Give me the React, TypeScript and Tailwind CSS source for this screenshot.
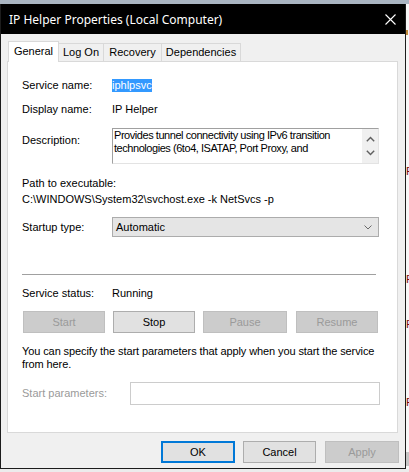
import React from "react";

const Chevron = ({ up = false, className = "" }: { up?: boolean; className?: string }) => (
  <svg width="9" height="6" viewBox="0 0 9 6" className={className}>
    <path
      d={up ? "M0.8 5.2 L4.5 1.4 L8.2 5.2" : "M0.8 0.8 L4.5 4.6 L8.2 0.8"}
      fill="none"
      stroke="#606060"
      strokeWidth="1.4"
    />
  </svg>
);

const SmallChevron = () => (
  <svg width="8" height="5" viewBox="0 0 8 5">
    <path d="M0.5 0.5 L4 4 L7.5 0.5" fill="none" stroke="#6a6a6a" strokeWidth="1" />
  </svg>
);

const CloseGlyph = () => (
  <svg width="11" height="11" viewBox="0 0 11 11">
    <path d="M0.5 0.5 L10.5 10.5 M10.5 0.5 L0.5 10.5" stroke="#ffffff" strokeWidth="1.1" />
  </svg>
);

function Tabs() {
  return (
    <div className="mt-[7px] ml-[7px] flex h-[20px] items-end">
      <div className="relative z-10 -mb-px flex h-[21px] w-[51px] items-center justify-center border border-b-0 border-[#d9d9d9] bg-white pb-[2px]">
        General
      </div>
      <div className="flex h-[18px] w-[45px] items-center justify-center border border-b-0 border-l-0 border-[#d9d9d9] bg-[#f0f0f0]">
        Log On
      </div>
      <div className="flex h-[18px] w-[58px] items-center justify-center border border-b-0 border-l-0 border-[#d9d9d9] bg-[#f0f0f0]">
        Recovery
      </div>
      <div className="flex h-[18px] w-[79px] items-center justify-center border border-b-0 border-l-0 border-[#d9d9d9] bg-[#f0f0f0]">
        Dependencies
      </div>
    </div>
  );
}

function ActionButton({
  label,
  enabled = false,
  wide = false,
}: {
  label: string;
  enabled?: boolean;
  wide?: boolean;
}) {
  const size = wide ? "w-[84px]" : "w-[82px]";
  return (
    <div
      className={
        enabled
          ? `flex h-[22px] ${size} items-center justify-center border border-[#adadad] bg-[#e1e1e1] text-black`
          : `flex h-[22px] ${size} items-center justify-center border border-[#bfbfbf] bg-[#cccccc] text-[#9a9a9a]`
      }
    >
      {label}
    </div>
  );
}

function GeneralPanel() {
  return (
    <div className="relative ml-[6px] flex h-[372px] w-[391px] flex-col border border-[#d9d9d9] bg-white pl-[14px]">
      {/* service name */}
      <div className="mt-[17px] flex h-[13px] items-center">
        <div className="w-[90px]">Service name:</div>
        <span className="bg-[#3399ff] text-white">iphlpsvc</span>
      </div>

      {/* display name */}
      <div className="mt-[11px] flex h-[13px] items-center">
        <div className="w-[90px]">Display name:</div>
        <span>IP Helper</span>
      </div>

      {/* description */}
      <div className="mt-[12px] flex h-[36px]">
        <div className="mt-[6px] w-[90px]">Description:</div>
        <div className="flex h-[36px] w-[267px] border border-[#a0a0a0] border-b-[#e3e3e3] border-r-[#e3e3e3]">
          <div className="flex-1 pl-[1px] whitespace-nowrap tracking-[-0.45px]">
            <div>Provides tunnel connectivity using IPv6 transition</div>
            <div>technologies (6to4, ISATAP, Port Proxy, and</div>
          </div>
          <div className="flex w-[16px] flex-col items-center bg-[#f0f0f0] pt-[7px]">
            <Chevron up />
            <Chevron className="mt-[8px]" />
          </div>
        </div>
      </div>

      {/* executable path */}
      <div className="mt-[13px] h-[13px]">Path to executable:</div>
      <div className="mt-[3px] h-[13px] whitespace-nowrap">
        {"C:\\WINDOWS\\System32\\svchost.exe -k NetSvcs -p"}
      </div>

      {/* startup type */}
      <div className="mt-[11px] flex h-[20px] items-center">
        <div className="w-[90px]">Startup type:</div>
        <div className="flex h-[20px] w-[267px] items-center justify-between border border-[#acacac] bg-[#e5e5e5] pl-[3px] pr-[6px]">
          <span>Automatic</span>
          <SmallChevron />
        </div>
      </div>

      <div className="mt-[37px] h-px w-[354px] bg-[#a0a0a0]" />

      {/* status */}
      <div className="mt-[12px] flex h-[13px] items-center">
        <div className="w-[90px]">Service status:</div>
        <span>Running</span>
      </div>

      <div className="mt-[11px] flex gap-[8px] pl-px">
        <ActionButton label="Start" />
        <ActionButton label="Stop" enabled />
        <ActionButton label="Pause" wide />
        <div className="ml-px">
          <ActionButton label="Resume" />
        </div>
      </div>

      <div className="mt-[12px] leading-[13px] tracking-[-0.1px]">
        <div>You can specify the start parameters that apply when you start the service</div>
        <div>from here.</div>
      </div>

      <div className="mt-[11px] flex h-[23px] items-center">
        <div className="w-[108px] text-[#9a9a9a]">Start parameters:</div>
        <div className="h-[23px] w-[250px] border border-[#cccccc] bg-white" />
      </div>
    </div>
  );
}

function Dialog() {
  return (
    <div className="flex h-[465px] w-[406px] shrink-0 flex-col border-x border-b border-[#1c1c1c] bg-[#f0f0f0]">
      <div className="flex h-[30px] shrink-0 items-center justify-between bg-black pl-[8px] pr-[9px] font-['Noto_Sans',sans-serif] text-[12px] text-white">
        <span>IP Helper Properties (Local Computer)</span>
        <CloseGlyph />
      </div>
      <Tabs />
      <GeneralPanel />
      <div className="mt-[8px] flex justify-end gap-[8px] pr-[6px]">
        <div className="flex h-[22px] w-[74px] items-center justify-center border-2 border-[#0078d7] bg-[#e1e1e1]">
          OK
        </div>
        <div className="flex h-[22px] w-[73px] items-center justify-center border border-[#adadad] bg-[#e1e1e1]">
          Cancel
        </div>
        <div className="ml-px flex h-[22px] w-[74px] items-center justify-center border border-[#bfbfbf] bg-[#cccccc] text-[#9a9a9a]">
          Apply
        </div>
      </div>
    </div>
  );
}

function Backdrop() {
  // sliver of the window underneath, to the right of the dialog
  return (
    <div className="flex w-[3px] flex-col overflow-hidden bg-[#f7f7f7] text-[11px] leading-[11px] text-[#7a0b0b]">
      <div className="mt-[26px] h-[5px] w-[2px] bg-[#c08a3a]" />
      <div className="mt-[131px] h-[11px]">F</div>
      <div className="mt-[97px] h-[11px]">F</div>
      <div className="mt-[34px] h-[11px]">F</div>
      <div className="mt-[67px] h-[11px]">F</div>
      <div className="mt-[44px] h-[14px] bg-[#c6c6c6]" />
    </div>
  );
}

export default function App() {
  return (
    <div className="flex h-[472px] w-[409px] flex-col overflow-hidden bg-[#ececec] font-['Liberation_Sans',Arial,sans-serif] text-[11px] leading-[13px] text-black">
      <div className="h-[4px] shrink-0 bg-[#a9b4c1]" />
      <div className="flex">
        <Dialog />
        <Backdrop />
      </div>
    </div>
  );
}
